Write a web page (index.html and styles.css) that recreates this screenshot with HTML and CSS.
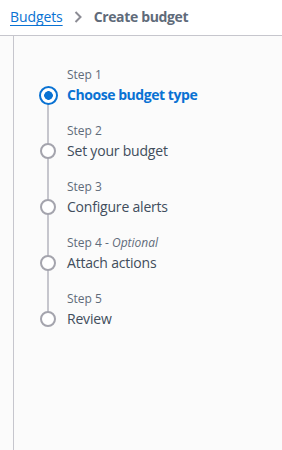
FILE: index.html
```html
<!DOCTYPE html>
<html>
<head>
<meta charset="utf-8">
<link rel="stylesheet" href="styles.css">
</head>
<body>
<header class="crumbs">
  <a class="crumb-link" href="#">Budgets</a>
  <svg class="chev" width="8" height="12" viewBox="0 0 8 12"><polyline points="1.5,1 6.5,6 1.5,11" fill="none" stroke="#8c8c94" stroke-width="2"/></svg>
  <span class="crumb-current">Create budget</span>
</header>
<main class="page">
  <nav class="steps">
    <div class="step active">
      <div class="rail"><span class="dot"></span></div>
      <div class="label">Step 1</div>
      <div class="title">Choose budget type</div>
    </div>
    <div class="step">
      <div class="rail"><span class="dot"></span></div>
      <div class="label">Step 2</div>
      <div class="title">Set your budget</div>
    </div>
    <div class="step">
      <div class="rail"><span class="dot"></span></div>
      <div class="label">Step 3</div>
      <div class="title">Configure alerts</div>
    </div>
    <div class="step">
      <div class="rail"><span class="dot"></span></div>
      <div class="label">Step 4 - <i>Optional</i></div>
      <div class="title">Attach actions</div>
    </div>
    <div class="step">
      <div class="rail"><span class="dot"></span></div>
      <div class="label">Step 5</div>
      <div class="title">Review</div>
    </div>
  </nav>
</main>
</body>
</html>
```
FILE: styles.css
```css
html, body {
  margin: 0;
  padding: 0;
}
body {
  font-family: "Open Sans", "Noto Sans", Arial, sans-serif;
  background: #fbfbfb;
  height: 450px;
  overflow: hidden;
}
.crumbs {
  height: 36px;
  box-sizing: border-box;
  background: #fff;
  border-bottom: 1px solid #c6c6cd;
  display: flex;
  align-items: center;
  padding: 0 0 2px 10px;
  font-size: 14px;
}
.crumb-link {
  color: #0972d3;
  text-decoration: underline;
  text-underline-offset: 3px;
  letter-spacing: -0.1px;
}
.chev {
  margin: 0 12px 0 11px;
}
.crumb-current {
  color: #5f6b7a;
  font-weight: 700;
  letter-spacing: -0.35px;
}
.page {
  padding-left: 13px;
}
.steps {
  border-left: 1px solid #c6c6cd;
  height: 414px;
  box-sizing: border-box;
  padding: 31px 0 0 24px;
}
.step {
  display: grid;
  grid-template-columns: 20px 1fr;
  grid-template-rows: 18px 20px 18px;
  column-gap: 9px;
}
.rail {
  grid-column: 1;
  grid-row: 1 / span 3;
  display: flex;
  justify-content: center;
  align-items: center;
  padding: 18px 0 18px;
  height: 20px;
  box-sizing: content-box;
  background: linear-gradient(#c6c6cd, #c6c6cd) center top / 2px 100% no-repeat;
}
.step:first-child .rail {
  background-position: center 28px;
}
.step:last-child .rail {
  background-size: 2px 28px;
}
.dot {
  width: 16px;
  height: 16px;
  box-sizing: border-box;
  border: 2px solid #a4a4ad;
  border-radius: 50%;
  background: #fff;
}
.active .dot {
  width: 19px;
  height: 19px;
  border-color: #0972d3;
  background: radial-gradient(circle, #0972d3 0 4px, #fff 4.6px);
}
.label {
  grid-column: 2;
  grid-row: 1;
  font-size: 12px;
  line-height: 16px;
  color: #5f6b7a;
}
.title {
  grid-column: 2;
  grid-row: 2;
  font-size: 14px;
  line-height: 20px;
  color: #414d5c;
  white-space: nowrap;
  letter-spacing: -0.2px;
}
.active .title {
  color: #0972d3;
  font-weight: 700;
  letter-spacing: -0.45px;
}
```
